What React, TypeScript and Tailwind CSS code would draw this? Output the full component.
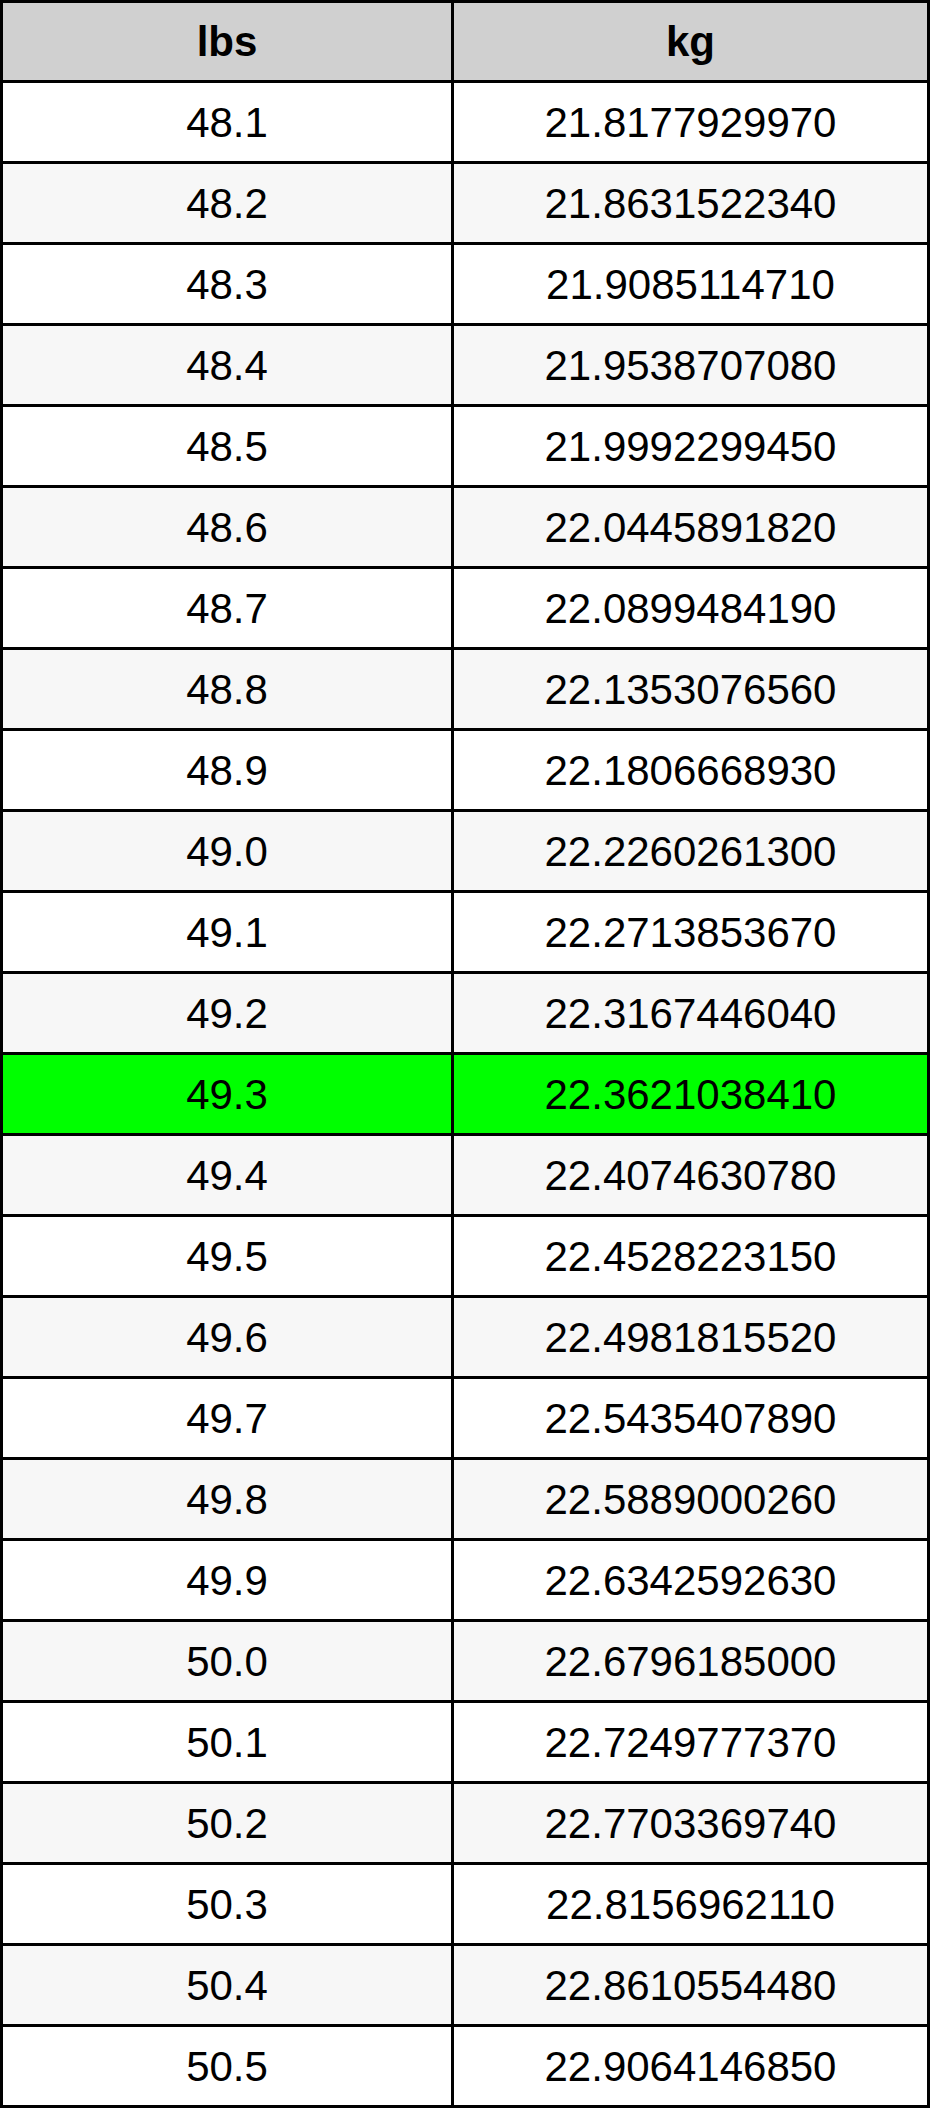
import React from "react";

const rows: [string, string][] = [
  ["48.1", "21.8177929970"],
  ["48.2", "21.8631522340"],
  ["48.3", "21.9085114710"],
  ["48.4", "21.9538707080"],
  ["48.5", "21.9992299450"],
  ["48.6", "22.0445891820"],
  ["48.7", "22.0899484190"],
  ["48.8", "22.1353076560"],
  ["48.9", "22.1806668930"],
  ["49.0", "22.2260261300"],
  ["49.1", "22.2713853670"],
  ["49.2", "22.3167446040"],
  ["49.3", "22.3621038410"],
  ["49.4", "22.4074630780"],
  ["49.5", "22.4528223150"],
  ["49.6", "22.4981815520"],
  ["49.7", "22.5435407890"],
  ["49.8", "22.5889000260"],
  ["49.9", "22.6342592630"],
  ["50.0", "22.6796185000"],
  ["50.1", "22.7249777370"],
  ["50.2", "22.7703369740"],
  ["50.3", "22.8156962110"],
  ["50.4", "22.8610554480"],
  ["50.5", "22.9064146850"],
];

export default function App() {
  return (
    <div className="w-[930px] bg-white" style={{ fontFamily: '"Liberation Sans", Arial, sans-serif' }}>
      <div className="flex flex-col border-[3px] border-black text-black text-[42px]">
        <div className="flex h-[77px] bg-[#d0d0d0] font-bold">
          <div className="w-[451px] flex items-center justify-center border-r-[3px] border-black">lbs</div>
          <div className="flex-1 flex items-center justify-center">kg</div>
        </div>
        {rows.map(([a, b], i) => {
          const bg = a === "49.3" ? "bg-[#00ff00]" : i % 2 === 1 ? "bg-[#f7f7f7]" : "bg-white";
          return (
            <div key={a} className={`flex h-[81px] border-t-[3px] border-black ${bg}`}>
              <div className="w-[451px] flex items-center justify-center border-r-[3px] border-black">{a}</div>
              <div className="flex-1 flex items-center justify-center">{b}</div>
            </div>
          );
        })}
      </div>
    </div>
  );
}
